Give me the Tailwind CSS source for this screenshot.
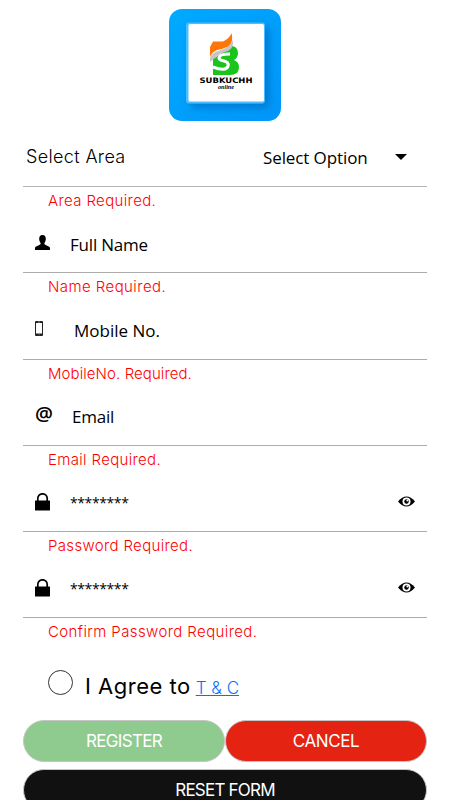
<!DOCTYPE html>
<html lang="en">
<head>
<meta charset="utf-8">
<title>Register</title>
<script src="https://cdn.jsdelivr.net/npm/@tailwindcss/browser@4"></script>
</head>
<body class="bg-white text-black font-['Inter','Liberation_Sans',sans-serif] h-[800px] overflow-hidden">
<main class="w-[450px] h-[800px] overflow-hidden flex flex-col">
  <header class="h-[130px] pt-[9px] flex justify-center items-start shrink-0">
    <svg class="w-28 h-28" viewBox="0 0 112 112">
      <defs>
        <linearGradient id="bg" x1="0" y1="0" x2="1" y2="1"><stop offset="0" stop-color="#00aaff"/><stop offset="1" stop-color="#0096fa"/></linearGradient>
        <filter id="sh" x="-30%" y="-30%" width="170%" height="170%"><feDropShadow dx="4" dy="4" stdDeviation="4" flood-color="#0060b0" flood-opacity=".6"/></filter>
      </defs>
      <rect width="112" height="112" rx="13" fill="url(#bg)"/>
      <rect x="17" y="13.500" width="79" height="81" rx="3" fill="#4dbdff" filter="url(#sh)"/>
      <rect x="19.500" y="15" width="75.500" height="77.500" rx="1.500" fill="#fff"/>
      <path d="M63 37Q69 38 69 44Q69 49 65 51Q70 53 70 58Q70 66 61 66H44V50L53 44Z" fill="#19c51c"/>
      <path d="M61 45Q50 45 50 49Q50 51 55 52Q60 53 59 57Q57 63 44 58" fill="none" stroke="#fff" stroke-width="3.200"/>
      <path d="M41 53V49Q43 43 52 41Q61 38 64 31Q65 39 59 42Q50 44 46 49Z" fill="#c5c5c5"/>
      <path d="M41 48V38L44 32.500H54Q61 29 62.500 24Q65 33 59 37.500Q54 40 48 41Q43 43 41 48Z" fill="#ff7608"/>
      <text x="30.500" y="74" textLength="53" lengthAdjust="spacingAndGlyphs" font-family="DejaVu Sans" font-weight="bold" font-size="7.500">SUBKUCHH</text>
      <text x="49" y="79.500" textLength="16" lengthAdjust="spacingAndGlyphs" font-family="Liberation Serif" font-style="italic" font-weight="bold" font-size="6">online</text>
    </svg>
  </header>

  <form class="px-[23px] flex flex-col shrink-0">
    <div class="h-[57px] border-b border-[#b4b4ba] flex items-center pb-[3px] pl-[3px]">
      <label class="text-[18px] font-light w-[237px] tracking-[0.35px]">Select Area</label>
      <span class="text-[17px] w-[132px] pt-0.5 font-['Open_Sans',sans-serif] tracking-[-0.1px]">Select Option</span>
      <svg class="w-3 h-1.5" viewBox="0 0 12 6"><path d="M0 0H12L6 6Z"/></svg>
    </div>

    <div class="h-[86.250px] border-b border-[#acacac] flex flex-col">
      <p class="h-[29px] pl-[25px] leading-[28px] text-[15px] text-[#ff0000] font-light tracking-[0.37px]">Area Required.</p>
      <div class="flex items-center h-[58px] pl-3">
        <svg class="w-[15px] h-[15px] mb-[3px]" viewBox="0 0 15 15"><path d="M7.500 0C10 0 11 2 10.800 4.500C10.600 6.500 9.500 7.500 9.300 8.800C9.500 10.500 15 11 15 13V15H0V13C0 11 5.500 10.500 5.700 8.800C5.500 7.500 4.400 6.500 4.200 4.500C4 2 5 0 7.500 0Z"/></svg>
        <span class="ml-5 pt-0.5 text-[17px] font-['Open_Sans',sans-serif] tracking-[-0.2px]">Full Name</span>
      </div>
    </div>

    <div class="h-[86.250px] border-b border-[#acacac] flex flex-col">
      <p class="h-[29px] pl-[25px] leading-[28px] text-[15px] text-[#ff0000] font-light tracking-[0.43px]">Name Required.</p>
      <div class="flex items-center h-[58px] pl-3">
        <svg class="w-2 h-[15px] mb-1" viewBox="0 0 8 15"><rect width="8" height="15" rx="1" fill="#222"/><rect x="1" y="2" width="6" height="10.500" fill="#fff"/><path d="M3 1H5M3.500 13.800H4.500" stroke="#bbb" stroke-width=".7"/></svg>
        <span class="ml-[31px] pt-px text-[17px] font-['Open_Sans',sans-serif]">Mobile No.</span>
      </div>
    </div>

    <div class="h-[86.250px] border-b border-[#acacac] flex flex-col">
      <p class="h-[29px] pl-[25px] leading-[28px] text-[15px] text-[#ff0000] font-light tracking-[0.08px]">MobileNo. Required.</p>
      <div class="flex items-center h-[58px] pl-3">
        <span class="w-[18px] h-[18px] mb-0.5 text-[20px] leading-[16px] font-semibold font-['Open_Sans',sans-serif]">@</span>
        <span class="ml-[19px] pt-px text-[17px] font-['Open_Sans',sans-serif] tracking-[-0.2px]">Email</span>
      </div>
    </div>

    <div class="h-[86.250px] border-b border-[#acacac] flex flex-col">
      <p class="h-[29px] pl-[25px] leading-[28px] text-[15px] text-[#ff0000] font-light tracking-[0.34px]">Email Required.</p>
      <div class="flex items-center h-[58px] pl-3">
        <svg class="w-[15px] h-[18px] mb-0.5" viewBox="0 0 15 18"><path d="M2.800 8V5.500A4.700 4.700 0 0 1 12.200 5.500V8" fill="none" stroke="#000" stroke-width="1.700"/><rect y="7.500" width="15" height="10" rx=".5"/></svg>
        <span class="ml-5 w-[308px] shrink-0 text-[14px] font-['Open_Sans',sans-serif] leading-none tracking-[-0.400px]">********</span>
        <svg class="w-[17px] h-[11px] mb-0.5 ml-5 shrink-0" viewBox="0 0 17 11"><path d="M0 5.500Q8.500-4.500 17 5.500Q8.500 15.500 0 5.500Z"/><circle cx="8.500" cy="5.500" r="4" fill="#fff"/><circle cx="8.500" cy="5.500" r="2.200"/><circle cx="9.300" cy="4.500" r=".9" fill="#fff"/></svg>
      </div>
    </div>

    <div class="h-[86.250px] border-b border-[#acacac] flex flex-col">
      <p class="h-[29px] pl-[25px] leading-[28px] text-[15px] text-[#ff0000] font-light tracking-[0.34px]">Password Required.</p>
      <div class="flex items-center h-[58px] pl-3">
        <svg class="w-[15px] h-[18px] mb-0.5" viewBox="0 0 15 18"><path d="M2.800 8V5.500A4.700 4.700 0 0 1 12.200 5.500V8" fill="none" stroke="#000" stroke-width="1.700"/><rect y="7.500" width="15" height="10" rx=".5"/></svg>
        <span class="ml-5 w-[308px] shrink-0 text-[14px] font-['Open_Sans',sans-serif] leading-none tracking-[-0.400px]">********</span>
        <svg class="w-[17px] h-[11px] mb-0.5 ml-5 shrink-0" viewBox="0 0 17 11"><path d="M0 5.500Q8.500-4.500 17 5.500Q8.500 15.500 0 5.500Z"/><circle cx="8.500" cy="5.500" r="4" fill="#fff"/><circle cx="8.500" cy="5.500" r="2.200"/><circle cx="9.300" cy="4.500" r=".9" fill="#fff"/></svg>
      </div>
    </div>

    <p class="h-[29px] pl-[25px] leading-[28px] text-[15px] text-[#ff0000] font-light tracking-[0.4px]">Confirm Password Required.</p>

    <div class="h-[73px] pl-[25px] pt-[23px] flex items-start">
      <span class="w-[25px] h-[25px] rounded-full border border-[#333]"></span>
      <label class="ml-3 text-[22px] leading-8 tracking-[0.5px]">I Agree to</label>
      <a class="ml-[5px] text-[17px] leading-9 font-light text-[#0d6efd] underline">T &amp; C</a>
    </div>

    <div class="flex">
      <button type="button" class="w-[202px] h-[42px] rounded-full border border-[#c6c6c6] bg-[#8fcb8f] text-white text-[17px] tracking-[-0.7px]">REGISTER</button>
      <button type="button" class="w-[202px] h-[42px] rounded-full border border-[#c6c6c6] bg-[#e42313] text-white text-[17px] tracking-[-0.400px]">CANCEL</button>
    </div>
    <button type="button" class="mt-[7px] w-[404px] h-[42px] rounded-full border border-[#c6c6c6] bg-[#111] text-white text-[17px] tracking-[-0.800px]">RESET FORM</button>
  </form>
</main>
</body>
</html>
